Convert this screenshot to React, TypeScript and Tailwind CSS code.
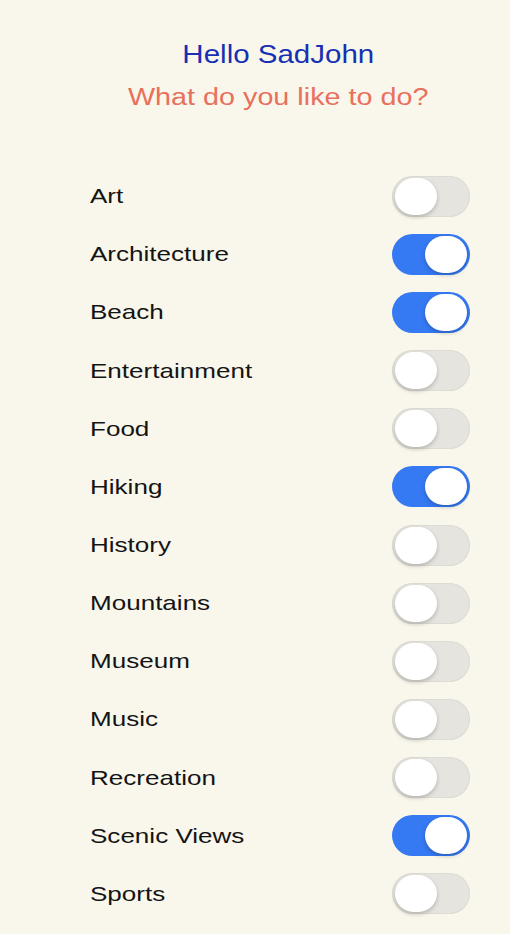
import { useState } from 'react'

const INTERESTS: { name: string; on: boolean }[] = [
  { name: 'Art', on: false },
  { name: 'Architecture', on: true },
  { name: 'Beach', on: true },
  { name: 'Entertainment', on: false },
  { name: 'Food', on: false },
  { name: 'Hiking', on: true },
  { name: 'History', on: false },
  { name: 'Mountains', on: false },
  { name: 'Museum', on: false },
  { name: 'Music', on: false },
  { name: 'Recreation', on: false },
  { name: 'Scenic Views', on: true },
  { name: 'Sports', on: false },
]

function Toggle({ on, onChange }: { on: boolean; onChange: () => void }) {
  return (
    <button
      type="button"
      onClick={onChange}
      className={`flex items-center w-[78px] h-[41px] rounded-full px-[3px] ${
        on
          ? 'bg-[#3579f3] justify-end'
          : 'bg-[#e5e4de] justify-start shadow-[inset_0_0_0_1px_#dcdbd4]'
      }`}
    >
      <span className="block w-[42px] h-[37px] rounded-full bg-white shadow-[0_2px_4px_rgba(0,0,0,0.22)]" />
    </button>
  )
}

export default function App() {
  const [items, setItems] = useState(INTERESTS)

  return (
    <div
      className="min-h-screen bg-[#f9f7ec] overflow-hidden"
      style={{ fontFamily: '"Liberation Sans", Arial, sans-serif' }}
    >
      {/* Header */}
      <div className="pt-[39px] pl-[46px] flex flex-col items-center">
        <h1 className="text-[25px] leading-[30px] text-[#1830b2] scale-x-[1.18]">
          Hello SadJohn
        </h1>
        <p className="mt-[13px] text-[23px] leading-[30px] text-[#e8705c] scale-x-[1.25]">
          What do you like to do?
        </p>
      </div>

      {/* Interests */}
      <div className="mt-[55px] pl-[90px] pr-[40px]">
        {items.map((item, i) => (
          <div key={item.name} className="h-[58.17px] flex items-center justify-between">
            <span className="text-[21px] leading-[26px] text-[#141414] origin-left scale-x-[1.24]">
              {item.name}
            </span>
            <Toggle
              on={item.on}
              onChange={() =>
                setItems((prev) =>
                  prev.map((p, j) => (j === i ? { ...p, on: !p.on } : p))
                )
              }
            />
          </div>
        ))}
      </div>
    </div>
  )
}
